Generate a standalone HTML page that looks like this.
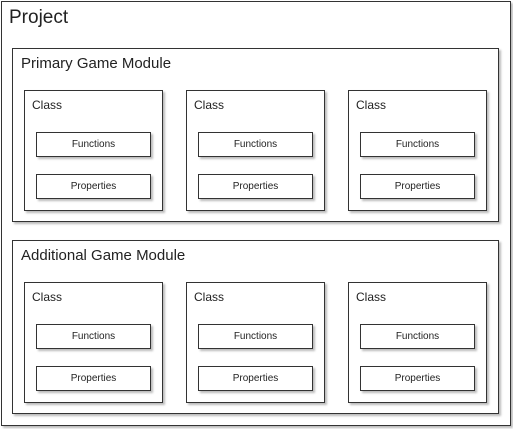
<!DOCTYPE html><html><head><style>
body{margin:0;width:513px;height:429px;background:#fff;font-family:"Liberation Sans",sans-serif;color:#222;position:relative;overflow:hidden}
.b{position:absolute;border:1px solid #333;background:#fff;box-shadow:2px 2px 2px #bbb;box-sizing:border-box}
.t{position:absolute;white-space:nowrap}
.s{position:absolute;border:1px solid #333;background:#fff;box-shadow:2px 2px 2px #bbb;box-sizing:border-box;font-size:10px;text-align:center;line-height:24px}
</style></head><body>
<div class="b" style="left:1px;top:1px;width:510px;height:425px"></div>
<div class="t" style="left:9px;top:7px;font-size:19px">Project</div>
<div id="c"></div>
<script>
var h='';
[48,240].forEach(function(y,i){
h+='<div class="b" style="left:12px;top:'+y+'px;width:487px;height:174px"></div>';
h+='<div class="t" style="left:21px;top:'+(y+7)+'px;font-size:15px">'+(i?'Additional':'Primary')+' Game Module</div>';
[24,186,348].forEach(function(x){
h+='<div class="b" style="left:'+x+'px;top:'+(y+42)+'px;width:139px;height:121px"></div>';
h+='<div class="t" style="left:'+(x+8)+'px;top:'+(y+50)+'px;font-size:12px">Class</div>';
h+='<div class="s" style="left:'+(x+12)+'px;top:'+(y+84)+'px;width:115px;height:25px">Functions</div>';
h+='<div class="s" style="left:'+(x+12)+'px;top:'+(y+126)+'px;width:115px;height:25px">Properties</div>';
});});
document.getElementById('c').innerHTML=h;
</script>
</body></html>
